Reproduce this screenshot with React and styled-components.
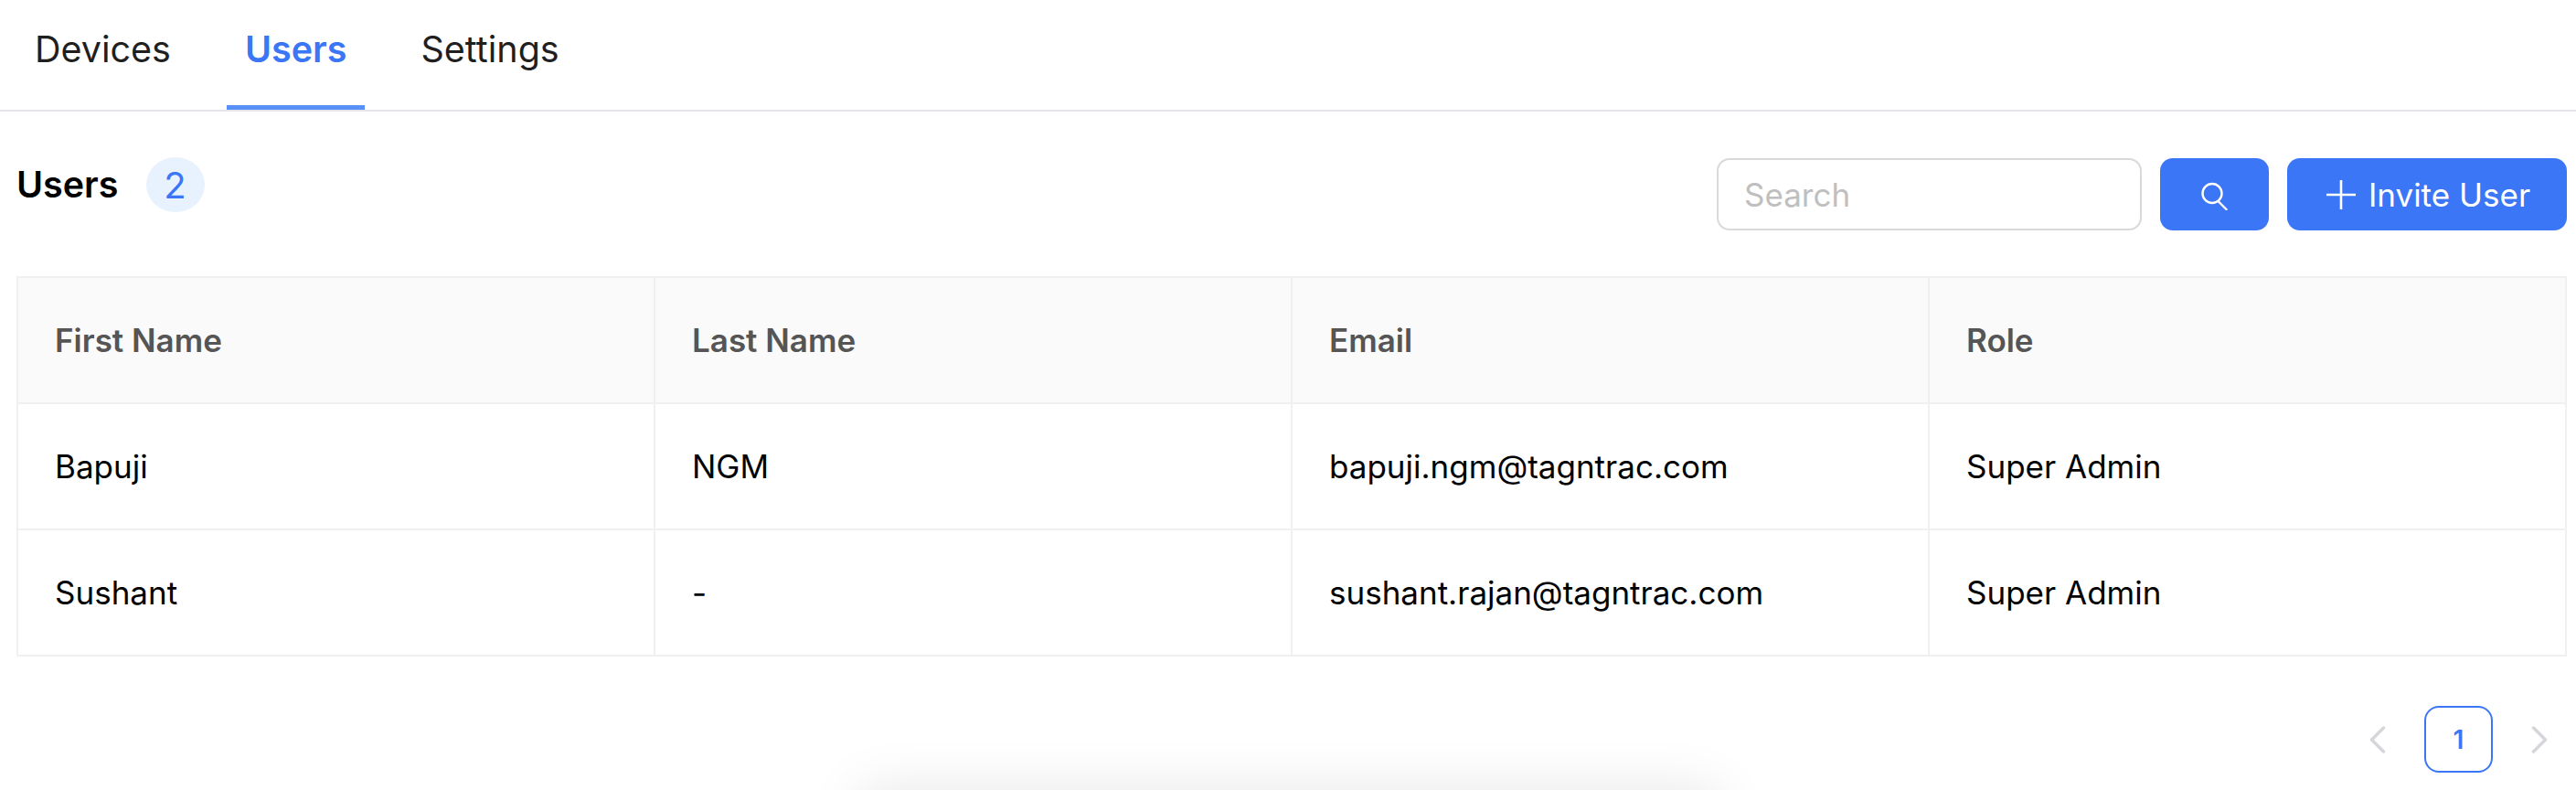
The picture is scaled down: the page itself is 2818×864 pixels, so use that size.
import styled, { createGlobalStyle } from 'styled-components'
import { ChevronLeft, ChevronRight } from 'lucide-react'

const users = [
  { first: 'Bapuji', last: 'NGM', email: 'bapuji.ngm@tagntrac.com', role: 'Super Admin' },
  { first: 'Sushant', last: '-', email: 'sushant.rajan@tagntrac.com', role: 'Super Admin' }
]

const App = () => {
  return (
    <>
      <Global />
      <Tabs>
        <Tab>Devices</Tab>
        <Tab active="true">Users</Tab>
        <Tab>Settings</Tab>
      </Tabs>
      <Content>
        <Toolbar>
          <Heading>
            <Title>Users</Title>
            <Count>2</Count>
          </Heading>
          <Actions>
            <SearchInput placeholder="Search" />
            <IconButton aria-label="Search">
              <svg width="32" height="34" viewBox="0 0 32 34" fill="none" stroke="#fff" strokeWidth="2.4">
                <circle cx="13" cy="15.5" r="10.5" />
                <path d="M19.5 24 L28.5 33" strokeLinecap="round" />
              </svg>
            </IconButton>
            <InviteButton>
              <svg width="32" height="32" viewBox="0 0 32 32" fill="none" stroke="#fff" strokeWidth="2.6">
                <path d="M16 0 V32 M0 16 H32" />
              </svg>
              Invite User
            </InviteButton>
          </Actions>
        </Toolbar>
        <Table>
          <thead>
            <tr>
              <Th>First Name</Th>
              <Th>Last Name</Th>
              <Th>Email</Th>
              <Th>Role</Th>
            </tr>
          </thead>
          <tbody>
            {users.map((u) => (
              <tr key={u.email}>
                <Td>{u.first}</Td>
                <Td>{u.last}</Td>
                <Td>{u.email}</Td>
                <Td>{u.role}</Td>
              </tr>
            ))}
          </tbody>
        </Table>
        <Pager>
          <Arrow size={52} strokeWidth={1.6} />
          <PageNumber>1</PageNumber>
          <Arrow as={ChevronRight} size={52} strokeWidth={1.6} />
        </Pager>
      </Content>
      <BottomShadow />
    </>
  )
}

export default App

const Global = createGlobalStyle`
  html, body {
    margin: 0;
    height: 864px;
    overflow: hidden;
    background: #fff;
    font-family: Inter, "Liberation Sans", sans-serif;
  }
`
const Tabs = styled.div`
  display: flex;
  column-gap: 41px;
  height: 120px;
  padding-left: 18px;
  border-bottom: 2px solid #e6e6ea;
`
const Tab = styled.div`
  display: flex;
  align-items: center;
  height: 120px;
  box-sizing: border-box;
  padding: 0 20px 6px;
  font-size: 39.5px;
  line-height: 1;
  color: ${({ active }) => (active ? '#3b76f6' : '#1f1f1f')};
  font-weight: ${({ active }) => (active ? 600 : 400)};
  border-bottom: 5px solid ${({ active }) => (active ? '#5890f7' : 'transparent')};
`
const Content = styled.div`
  padding: 50px 10px 0 18px;
`
const Toolbar = styled.div`
  display: flex;
  align-items: flex-start;
  justify-content: space-between;
  height: 130px;
`
const Heading = styled.div`
  display: flex;
  align-items: center;
  column-gap: 30px;
`
const Title = styled.div`
  font-size: 39.5px;
  font-weight: 600;
  color: #000;
`
const Count = styled.div`
  display: flex;
  align-items: center;
  justify-content: center;
  width: 64px;
  height: 60px;
  border-radius: 50%;
  background: #e8f2ff;
  color: #3b76f6;
  font-size: 40px;
`
const Actions = styled.div`
  display: flex;
  align-items: center;
  column-gap: 20px;
  margin-top: 1px;
`
const SearchInput = styled.input`
  box-sizing: border-box;
  width: 465px;
  height: 79px;
  padding: 0 28px;
  border: 2px solid #d9d9d9;
  border-radius: 14px;
  font-family: inherit;
  font-size: 35px;
  outline: none;
  &::placeholder {
    color: #bfbfbf;
  }
`
const IconButton = styled.button`
  display: flex;
  align-items: center;
  justify-content: center;
  width: 119px;
  height: 79px;
  padding: 0;
  border: none;
  border-radius: 14px;
  background: #3b76f6;
`
const InviteButton = styled(IconButton)`
  width: 306px;
  padding-left: 3px;
  column-gap: 14px;
  color: #fff;
  font-family: inherit;
  font-size: 35px;
`
const Table = styled.table`
  width: 100%;
  table-layout: fixed;
  border-collapse: collapse;
  font-size: 35px;
`
const Th = styled.th`
  height: 136px;
  padding: 0 40px;
  border: 2px solid #f0f0f0;
  background: #fafafa;
  color: #555;
  font-weight: 600;
  text-align: left;
`
const Td = styled.td`
  height: 136px;
  padding: 0 40px;
  border: 2px solid #f0f0f0;
  color: #000;
`
const Pager = styled.div`
  display: flex;
  align-items: center;
  justify-content: flex-end;
  column-gap: 25px;
  margin-top: 54px;
  padding-right: 4px;
`
const Arrow = styled(ChevronLeft)`
  color: #d4d6da;
`
const PageNumber = styled.div`
  display: flex;
  align-items: center;
  justify-content: center;
  box-sizing: border-box;
  width: 75px;
  height: 73px;
  border: 2px solid #3b76f6;
  border-radius: 16px;
  color: #3b76f6;
  font-size: 28px;
  font-weight: 600;
`
const BottomShadow = styled.div`
  position: fixed;
  left: 960px;
  bottom: -60px;
  width: 900px;
  height: 40px;
  box-shadow: 0 0 60px 20px rgba(0, 0, 0, 0.1);
`
